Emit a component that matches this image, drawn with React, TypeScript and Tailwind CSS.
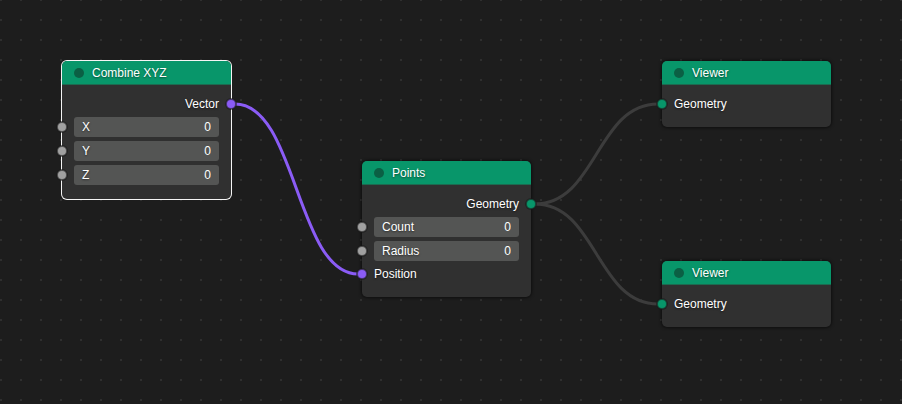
import { useState } from "react";

type SocketKind = "value" | "vector" | "geometry";

type Row =
  | { type: "output"; label: string; kind: SocketKind }
  | { type: "input"; label: string; kind: SocketKind }
  | { type: "field"; label: string };

interface GraphNode {
  id: string;
  title: string;
  place: string;
  selected?: boolean;
  rows: Row[];
}

const nodes: GraphNode[] = [
  {
    id: "combine",
    title: "Combine XYZ",
    place: "left-[62px] top-[61px]",
    selected: true,
    rows: [
      { type: "output", label: "Vector", kind: "vector" },
      { type: "field", label: "X" },
      { type: "field", label: "Y" },
      { type: "field", label: "Z" },
    ],
  },
  {
    id: "points",
    title: "Points",
    place: "left-[362px] top-[161px]",
    rows: [
      { type: "output", label: "Geometry", kind: "geometry" },
      { type: "field", label: "Count" },
      { type: "field", label: "Radius" },
      { type: "input", label: "Position", kind: "vector" },
    ],
  },
  {
    id: "viewer-a",
    title: "Viewer",
    place: "left-[662px] top-[61px]",
    rows: [{ type: "input", label: "Geometry", kind: "geometry" }],
  },
  {
    id: "viewer-b",
    title: "Viewer",
    place: "left-[662px] top-[261px]",
    rows: [{ type: "input", label: "Geometry", kind: "geometry" }],
  },
];

const edges = [
  { from: [235, 104], to: [358, 274], color: "#8b5cf6" },
  { from: [535, 204], to: [658, 104], color: "#3c3c3c" },
  { from: [535, 204], to: [658, 304], color: "#3c3c3c" },
];

const socketColor: Record<SocketKind, string> = {
  value: "bg-[#a1a1a1]",
  vector: "bg-[#8b5cf6]",
  geometry: "bg-[#08966a]",
};

function Socket({ kind, side }: { kind: SocketKind; side: "left" | "right" }) {
  return (
    <span
      className={`absolute top-1/2 size-[10px] -translate-y-1/2 rounded-full border border-[#1b1b1b]/60 shadow-[0_0_0_1px_rgba(27,27,27,0.6)] ${
        side === "left" ? "-left-[5px]" : "-right-[5px]"
      } ${socketColor[kind]}`}
    />
  );
}

function NumberField({ id, label }: { id: string; label: string }) {
  const [value, setValue] = useState("0");
  return (
    <div className="relative px-3">
      <Socket kind="value" side="left" />
      <div className="flex h-5 items-center rounded-[3px] bg-[#545554] px-2">
        <label htmlFor={id}>{label}</label>
        <input
          id={id}
          inputMode="decimal"
          value={value}
          onChange={(e) => setValue(e.target.value)}
          className="min-w-0 flex-1 bg-transparent text-right outline-none"
        />
      </div>
    </div>
  );
}

function NodeCard({ node }: { node: GraphNode }) {
  return (
    <section
      className={`absolute w-[169px] rounded-[5px] bg-[#303030] ${node.place} ${
        node.selected
          ? "shadow-[0_0_0_1px_#f5f5f5]"
          : "shadow-[0_0_3px_1px_rgba(0,0,0,0.5)]"
      }`}
    >
      <header className="flex h-6 items-center gap-2 rounded-t-[5px] border-b border-[#1c6b50] bg-[#08966a] px-3">
        <span className="size-[10px] rounded-full bg-[#0b5f44]" />
        <h2>{node.title}</h2>
      </header>
      <div className="flex flex-col gap-1 pt-[10px] pb-[14px]">
        {node.rows.map((row) => {
          if (row.type === "field") {
            return (
              <NumberField key={row.label} id={`${node.id}-${row.label}`} label={row.label} />
            );
          }
          const output = row.type === "output";
          return (
            <div
              key={row.label}
              className={`relative flex h-[18px] items-center px-3 ${output ? "justify-end" : ""}`}
            >
              <span>{row.label}</span>
              <Socket kind={row.kind} side={output ? "right" : "left"} />
            </div>
          );
        })}
      </div>
    </section>
  );
}

export default function App() {
  return (
    <main className="relative h-screen w-full overflow-hidden bg-[#1d1d1d] bg-[radial-gradient(circle_at_center,#2f2f2f_1px,transparent_1px)] bg-[length:20px_20px] bg-[position:11px_10px] font-['Liberation_Sans',Arial,sans-serif] text-[12px] leading-4 text-white [text-shadow:0_1px_2px_rgba(0,0,0,0.5)]">
      <svg className="absolute inset-0 size-full" fill="none" aria-hidden="true">
        {edges.map(({ from: [x1, y1], to: [x2, y2], color }) => {
          const mid = (x1 + x2) / 2;
          return (
            <path
              key={`${x1}-${y2}`}
              d={`M${x1},${y1} C${mid},${y1} ${mid},${y2} ${x2},${y2}`}
              stroke={color}
              strokeWidth="3"
            />
          );
        })}
      </svg>
      {nodes.map((node) => (
        <NodeCard key={node.id} node={node} />
      ))}
    </main>
  );
}
